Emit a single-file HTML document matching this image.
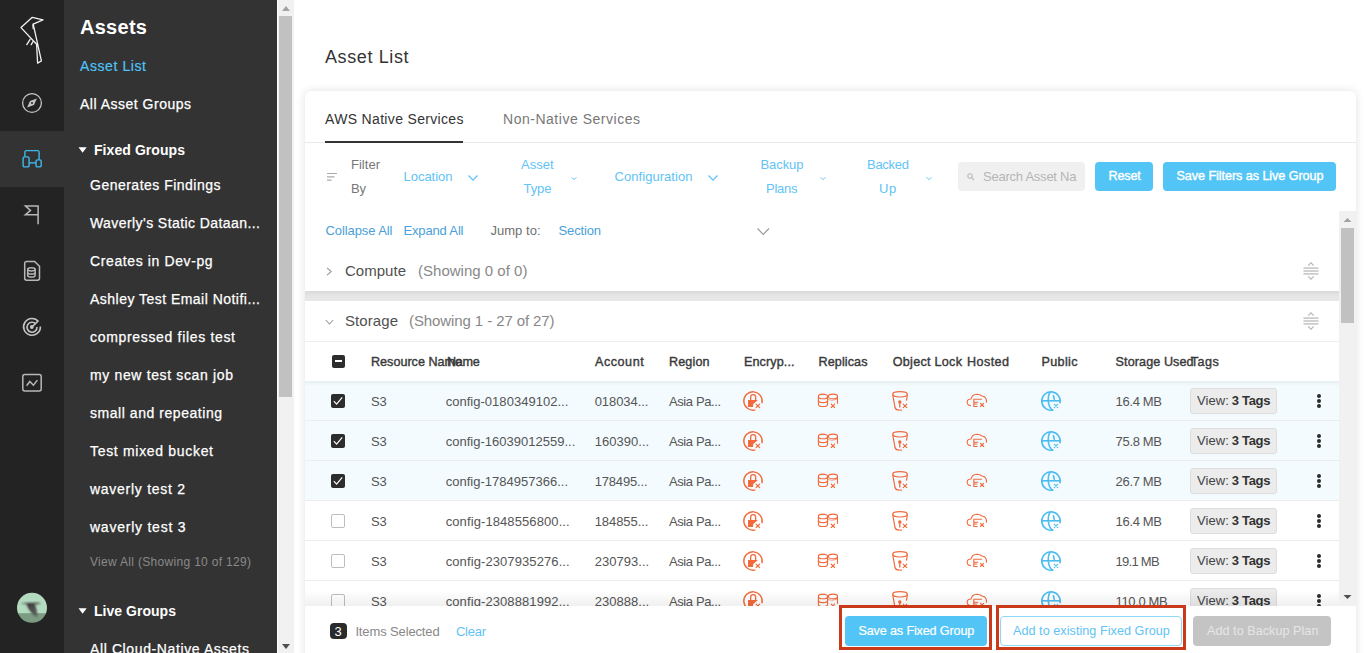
<!DOCTYPE html>
<html><head><meta charset="utf-8">
<style>
*{margin:0;padding:0;box-sizing:border-box}
html,body{width:1365px;height:653px;overflow:hidden;background:#fff;font-family:"Liberation Sans",sans-serif;position:relative}
.abs{position:absolute}
.t{position:absolute;white-space:nowrap;line-height:1}
svg{overflow:visible}
</style></head>
<body>
<div class="abs" style="left:0px;top:0px;width:64px;height:653px;background:#232323"></div>
<div class="abs" style="left:0px;top:131px;width:64px;height:56px;background:#333333"></div>
<svg class="abs" style="left:0;top:0" width="64" height="653" viewBox="0 0 64 653"><g fill="none" stroke="#f2f2f2" stroke-width="1.3" stroke-linejoin="round" stroke-linecap="round"><path d="M33.2 24.2 L43 19.8 L32.3 17.3 L21 27.6 L36.6 44.3 L37.6 63.2 L41.4 60.9 Z"/><path d="M33.2 24.2 C32.6 25.5 33 27 33.3 28.5"/><path d="M30.1 39.4 L26.8 44.6 M33.1 41.5 L31.2 44.6"/></g><circle cx="32" cy="103" r="9.4" fill="none" stroke="#c4c4c4" stroke-width="1.3"/><path d="M36.9 98.4 L34 105 L27.1 107.6 L30 101Z" fill="#c4c4c4"/><circle cx="32" cy="102.9" r="1" fill="#232323"/><g fill="none" stroke="#3fb8ec" stroke-width="1.4"><path d="M24.9 156.6 V152.1 A1.5 1.5 0 0 1 26.4 150.6 H37.6 A1.5 1.5 0 0 1 39.1 152.1 V159.7"/><rect x="23.1" y="156.9" width="6" height="10" rx="1.5"/><rect x="36" y="159.9" width="5.2" height="7" rx="1.5"/><path d="M29.1 162.9 H36"/></g><path d="M38.1 224.2 V205.9 H25.4 L30.5 210.4 L25.4 214.8 H38.1" fill="none" stroke="#b8b8b8" stroke-width="1.5" stroke-linejoin="miter"/><g fill="none" stroke="#b8b8b8" stroke-width="1.5"><path d="M34.6 261.5 H26.6 A1.9 1.9 0 0 0 24.7 263.4 V278.3 A1.9 1.9 0 0 0 26.6 280.2 H37.6 A1.9 1.9 0 0 0 39.5 278.3 V266.3 Z"/><ellipse cx="31.4" cy="269.3" rx="3.7" ry="1.6"/><path d="M27.7 269.3 V275.4 A3.7 1.6 0 0 0 35.1 275.4 V269.3"/><path d="M27.7 272.4 A3.7 1.6 0 0 0 35.1 272.4"/></g><g fill="none" stroke="#c4c4c4" stroke-width="1.6"><path d="M38.5 321.5 A8.4 8.4 0 1 0 40.4 326.5"/><path d="M35.8 324 A5 5 0 1 0 37 327"/><path d="M32 327 L38 321"/></g><circle cx="31.8" cy="327" r="1.9" fill="#c4c4c4"/><g fill="none" stroke="#b8b8b8" stroke-width="1.5"><rect x="22.8" y="374.6" width="18.4" height="16.3" rx="2"/><path d="M26.6 385.7 L29.8 381.5 L33.4 385.2 L37.4 380.1"/></g><defs><clipPath id="av"><circle cx="32" cy="607.8" r="15"/></clipPath></defs><filter id="bl"><feGaussianBlur stdDeviation="0.9"/></filter><g clip-path="url(#av)"><rect x="17" y="592" width="30" height="22" fill="#b4dbbf"/><rect x="17" y="613.2" width="30" height="10" fill="#7b9c82"/><g filter="url(#bl)"><path d="M20.3 603.4 C24 602.6 28 602.6 31 603 C35 602.4 38 602.4 40.5 603 L39 604.3 C37 604 35 604.5 34 605.5 Z" fill="#555"/><path d="M26.8 603.6 C29.5 602.2 33.5 602.6 34.8 604.8 C36 607.5 37 611.5 37.2 617 C34 615.5 30.2 611.5 28.2 607.8 C27.2 606 26.6 604.6 26.8 603.6Z" fill="#3a3a3a"/><path d="M31.5 606 C33 609 34.5 612.5 36.6 616.5" stroke="#6a6a6a" stroke-width="1.4" fill="none"/></g></g></svg>
<div class="abs" style="left:64px;top:0px;width:213px;height:653px;background:#333333"></div>
<div class="abs" style="left:277px;top:0px;width:1px;height:653px;background:#ffffff"></div>
<div class="abs" style="left:278px;top:0px;width:16px;height:653px;background:#f1f1f1"></div>
<div class="abs" style="left:279px;top:16px;width:13px;height:381px;background:#c1c1c1"></div>
<svg class="abs" style="left:278px;top:0" width="16" height="653"><path d="M4 11 L8 6 L12 11Z" fill="#a3a3a3"/><path d="M4 644 L8 649 L12 644Z" fill="#505050"/></svg>
<div class="t" style="left:80px;top:17.07px;font-size:20px;color:#fff;font-weight:bold;letter-spacing:0.278px;">Assets</div>
<div class="t" style="left:80px;top:59.15px;font-size:14px;color:#4fc3f7;letter-spacing:0.589px;-webkit-text-stroke:0.2px #4fc3f7;">Asset List</div>
<div class="t" style="left:80px;top:97.15px;font-size:14px;color:#fff;letter-spacing:0.5px;-webkit-text-stroke:0.25px #fff;">All Asset Groups</div>
<svg class="abs" style="left:77.5px;top:146.8px" width="10" height="7"><path d="M0.5 0.3 L8.7 0.3 L4.6 5.8Z" fill="#fff"/></svg>
<div class="t" style="left:94px;top:143.15px;font-size:14px;color:#fff;font-weight:bold;letter-spacing:0.07px;">Fixed Groups</div>
<div class="t" style="left:90px;top:178.15px;font-size:14px;color:#fff;letter-spacing:0.489px;-webkit-text-stroke:0.25px #fff;">Generates Findings</div>
<div class="t" style="left:90px;top:216.15px;font-size:14px;color:#fff;letter-spacing:0.427px;-webkit-text-stroke:0.25px #fff;">Waverly's Static Dataan...</div>
<div class="t" style="left:90px;top:254.15px;font-size:14px;color:#fff;letter-spacing:0.611px;-webkit-text-stroke:0.25px #fff;">Creates in Dev-pg</div>
<div class="t" style="left:90px;top:292.15px;font-size:14px;color:#fff;letter-spacing:0.474px;-webkit-text-stroke:0.25px #fff;">Ashley Test Email Notifi...</div>
<div class="t" style="left:90px;top:330.15px;font-size:14px;color:#fff;letter-spacing:0.675px;-webkit-text-stroke:0.25px #fff;">compressed files test</div>
<div class="t" style="left:90px;top:368.15px;font-size:14px;color:#fff;letter-spacing:0.646px;-webkit-text-stroke:0.25px #fff;">my new test scan job</div>
<div class="t" style="left:90px;top:406.15px;font-size:14px;color:#fff;letter-spacing:0.545px;-webkit-text-stroke:0.25px #fff;">small and repeating</div>
<div class="t" style="left:90px;top:444.15px;font-size:14px;color:#fff;letter-spacing:0.684px;-webkit-text-stroke:0.25px #fff;">Test mixed bucket</div>
<div class="t" style="left:90px;top:482.15px;font-size:14px;color:#fff;letter-spacing:0.724px;-webkit-text-stroke:0.25px #fff;">waverly test 2</div>
<div class="t" style="left:90px;top:520.15px;font-size:14px;color:#fff;letter-spacing:0.762px;-webkit-text-stroke:0.25px #fff;">waverly test 3</div>
<div class="t" style="left:90px;top:555.84px;font-size:12px;color:#8a8a8a;letter-spacing:0.313px;">View All (Showing 10 of 129)</div>
<svg class="abs" style="left:77.5px;top:608.3px" width="10" height="7"><path d="M0.5 0.3 L8.7 0.3 L4.6 5.8Z" fill="#fff"/></svg>
<div class="t" style="left:94px;top:604.15px;font-size:14px;color:#fff;font-weight:bold;letter-spacing:0.031px;">Live Groups</div>
<div class="t" style="left:90px;top:641.65px;font-size:14px;color:#fff;letter-spacing:0.613px;-webkit-text-stroke:0.25px #fff;">All Cloud-Native Assets</div>
<div class="t" style="left:325px;top:47.76px;font-size:18px;color:#333;letter-spacing:0.608px;">Asset List</div>
<div class="abs" style="left:305px;top:91px;width:1051px;height:600px;background:#fff;border-radius:6px;box-shadow:0 0 10px rgba(0,0,0,0.12)"></div>
<div class="t" style="left:325px;top:112.15px;font-size:14px;color:#333;letter-spacing:0.332px;">AWS Native Services</div>
<div class="t" style="left:503px;top:112.15px;font-size:14px;color:#777;letter-spacing:0.522px;">Non-Native Services</div>
<div class="abs" style="left:305px;top:142px;width:1051px;height:1px;background:#e9e9e9"></div>
<div class="abs" style="left:325px;top:141px;width:138px;height:2px;background:#333333"></div>
<svg class="abs" style="left:326px;top:172px" width="12" height="10"><g stroke="#aaa" stroke-width="1.2"><path d="M1 1.5H11M1 4.8H8.5M1 8.1H5.5"/></g></svg>
<div class="t" style="left:351px;top:158.00px;font-size:13px;color:#777;letter-spacing:0.022px;">Filter</div>
<div class="t" style="left:351px;top:182.00px;font-size:13px;color:#777;letter-spacing:-0.172px;">By</div>
<div class="t" style="left:403.5px;top:170.00px;font-size:13px;color:#5fc3f5;letter-spacing:-0.022px;">Location</div>
<svg class="abs" style="left:467.5px;top:174.5px" width="10" height="5.6"><path d="M0.5 0.5 L5.0 5.1 L9.5 0.5" fill="none" stroke="#5fc3f5" stroke-width="1.3"/></svg>
<div class="t" style="left:521px;top:158.00px;font-size:13px;color:#5fc3f5;letter-spacing:-0.004px;">Asset</div>
<div class="t" style="left:523.5px;top:182.00px;font-size:13px;color:#5fc3f5;letter-spacing:-0.062px;">Type</div>
<svg class="abs" style="left:570.5px;top:176.5px" width="6" height="3"><path d="M0.5 0.5 L3.0 2.5 L5.5 0.5" fill="none" stroke="#5fc3f5" stroke-width="0.9"/></svg>
<div class="t" style="left:614.5px;top:170.00px;font-size:13px;color:#5fc3f5;letter-spacing:0.056px;">Configuration</div>
<svg class="abs" style="left:707.5px;top:174.5px" width="10" height="5.6"><path d="M0.5 0.5 L5.0 5.1 L9.5 0.5" fill="none" stroke="#5fc3f5" stroke-width="1.3"/></svg>
<div class="t" style="left:760.5px;top:158.00px;font-size:13px;color:#5fc3f5;letter-spacing:-0.075px;">Backup</div>
<div class="t" style="left:766px;top:182.00px;font-size:13px;color:#5fc3f5;letter-spacing:-0.258px;">Plans</div>
<svg class="abs" style="left:820px;top:176.5px" width="6" height="3"><path d="M0.5 0.5 L3.0 2.5 L5.5 0.5" fill="none" stroke="#5fc3f5" stroke-width="0.9"/></svg>
<div class="t" style="left:867px;top:158.00px;font-size:13px;color:#5fc3f5;letter-spacing:-0.275px;">Backed</div>
<div class="t" style="left:879px;top:182.00px;font-size:13px;color:#5fc3f5;letter-spacing:0.675px;">Up</div>
<svg class="abs" style="left:925.5px;top:176.5px" width="6" height="3"><path d="M0.5 0.5 L3.0 2.5 L5.5 0.5" fill="none" stroke="#5fc3f5" stroke-width="0.9"/></svg>
<div class="abs" style="left:958px;top:162px;width:127px;height:29px;background:#f0f0f0;border-radius:4px"></div>
<svg class="abs" style="left:967px;top:173px" width="8" height="8"><circle cx="3" cy="3" r="2.2" fill="none" stroke="#bbb" stroke-width="1.1"/><path d="M4.6 4.6L7 7" stroke="#bbb" stroke-width="1.2"/></svg>
<div class="t" style="left:983px;top:170.00px;font-size:13px;color:#b5b5b5;letter-spacing:-0.238px;">Search Asset Na</div>
<div class="abs" style="left:1077px;top:164px;width:8px;height:25px;background:#f0f0f0;border-radius:0 4px 4px 0"></div>
<div class="abs" style="left:1095px;top:162px;width:58px;height:29px;background:#52c5f6;border-radius:4px"></div>
<div class="t" style="left:1108.5px;top:170.33px;font-size:12.6px;color:#fff;letter-spacing:-0.152px;-webkit-text-stroke:0.4px #fff;">Reset</div>
<div class="abs" style="left:1163px;top:162px;width:173px;height:29px;background:#52c5f6;border-radius:4px"></div>
<div class="t" style="left:1176.5px;top:170.33px;font-size:12.6px;color:#fff;letter-spacing:-0.056px;-webkit-text-stroke:0.4px #fff;">Save Filters as Live Group</div>
<div class="t" style="left:325.5px;top:224.00px;font-size:13px;color:#4a9fd9;letter-spacing:-0.085px;">Collapse All</div>
<div class="t" style="left:403.5px;top:224.00px;font-size:13px;color:#4a9fd9;letter-spacing:-0.16px;">Expand All</div>
<div class="t" style="left:490.5px;top:224.00px;font-size:13px;color:#707070;letter-spacing:0.02px;">Jump to:</div>
<div class="t" style="left:558.5px;top:224.00px;font-size:13px;color:#4a9fd9;letter-spacing:-0.129px;">Section</div>
<svg class="abs" style="left:757px;top:227.5px" width="12.5" height="7"><path d="M0.5 0.5 L6.25 6.5 L12.0 0.5" fill="none" stroke="#999" stroke-width="1.1"/></svg>
<div class="abs" style="left:305px;top:291px;width:1034px;height:10px;background:linear-gradient(#dadada,#e4e4e4 40%,#e8e8e8)"></div>
<svg class="abs" style="left:326px;top:267px" width="7" height="9"><path d="M1 0.8 L5.2 4.5 L1 8.2" fill="none" stroke="#999" stroke-width="1.1"/></svg>
<div class="t" style="left:345px;top:263.30px;font-size:15px;color:#505050;letter-spacing:0.021px;">Compute</div>
<div class="t" style="left:418px;top:263.30px;font-size:15px;color:#888;letter-spacing:0.011px;">(Showing 0 of 0)</div>
<svg class="abs" style="left:325px;top:318.5px" width="9" height="6"><path d="M0.8 1 L4.5 5 L8.2 1" fill="none" stroke="#999" stroke-width="1.1"/></svg>
<div class="t" style="left:345px;top:313.30px;font-size:15px;color:#505050;letter-spacing:0.076px;">Storage</div>
<div class="t" style="left:409px;top:313.30px;font-size:15px;color:#888;letter-spacing:-0.095px;">(Showing 1 - 27 of 27)</div>
<div class="abs" style="left:305px;top:301px;width:1034px;height:1px;background:#fff;border-radius:3px 3px 0 0"></div>
<svg class="abs" style="left:1303px;top:262px" width="16" height="18"><g fill="none" stroke="#b5b5b5" stroke-width="1.2"><path d="M5.2 3.6 L8 0.9 L10.8 3.6"/><path d="M5.2 14.4 L8 17.1 L10.8 14.4"/></g><g fill="#c6c6c6"><rect x="0.5" y="5.3" width="15" height="1.6"/><rect x="0.5" y="8.2" width="15" height="1.6"/><rect x="0.5" y="11.1" width="15" height="1.6"/></g></svg>
<svg class="abs" style="left:1303px;top:312px" width="16" height="18"><g fill="none" stroke="#b5b5b5" stroke-width="1.2"><path d="M5.2 3.6 L8 0.9 L10.8 3.6"/><path d="M5.2 14.4 L8 17.1 L10.8 14.4"/></g><g fill="#c6c6c6"><rect x="0.5" y="5.3" width="15" height="1.6"/><rect x="0.5" y="8.2" width="15" height="1.6"/><rect x="0.5" y="11.1" width="15" height="1.6"/></g></svg>
<div class="abs" style="left:305px;top:341px;width:1034px;height:1px;background:#eeeeee"></div>
<div class="abs" style="left:331.5px;top:354.5px;width:13px;height:13px;background:#2d2d2d;border-radius:2px"></div>
<div class="abs" style="left:334.5px;top:360px;width:7px;height:1.8px;background:#fff"></div>
<div class="t" style="left:371px;top:355.83px;font-size:12.6px;color:#3a3a3a;letter-spacing:0.0px;-webkit-text-stroke:0.4px #3a3a3a;">Resource Name</div>
<div class="t" style="left:447px;top:355.83px;font-size:12.6px;color:#3a3a3a;letter-spacing:-0.298px;-webkit-text-stroke:0.4px #3a3a3a;">Name</div>
<div class="t" style="left:595px;top:355.83px;font-size:12.6px;color:#3a3a3a;letter-spacing:0.531px;-webkit-text-stroke:0.4px #3a3a3a;">Account</div>
<div class="t" style="left:669px;top:355.83px;font-size:12.6px;color:#3a3a3a;letter-spacing:0.136px;-webkit-text-stroke:0.4px #3a3a3a;">Region</div>
<div class="t" style="left:744px;top:355.83px;font-size:12.6px;color:#3a3a3a;letter-spacing:0.1px;-webkit-text-stroke:0.4px #3a3a3a;">Encryp...</div>
<div class="t" style="left:818.5px;top:355.83px;font-size:12.6px;color:#3a3a3a;letter-spacing:0.1px;-webkit-text-stroke:0.4px #3a3a3a;">Replicas</div>
<div class="t" style="left:892.7px;top:355.83px;font-size:12.6px;color:#3a3a3a;letter-spacing:0.28px;-webkit-text-stroke:0.4px #3a3a3a;">Object Lock</div>
<div class="t" style="left:967px;top:355.83px;font-size:12.6px;color:#3a3a3a;letter-spacing:0.419px;-webkit-text-stroke:0.4px #3a3a3a;">Hosted</div>
<div class="t" style="left:1041.5px;top:355.83px;font-size:12.6px;color:#3a3a3a;letter-spacing:0.338px;-webkit-text-stroke:0.4px #3a3a3a;">Public</div>
<div class="t" style="left:1115.6px;top:355.83px;font-size:12.6px;color:#3a3a3a;letter-spacing:0.089px;-webkit-text-stroke:0.4px #3a3a3a;">Storage Used</div>
<div class="t" style="left:1190.8px;top:355.83px;font-size:12.6px;color:#3a3a3a;letter-spacing:0.464px;-webkit-text-stroke:0.4px #3a3a3a;">Tags</div>
<div class="abs" style="left:305px;top:381px;width:1034px;height:40px;background:#f3fbfe"></div>
<div class="abs" style="left:305px;top:420px;width:1034px;height:1px;background:#ececec"></div>
<div class="abs" style="left:331px;top:393.5px;width:14px;height:14px;background:#2d2d2d;border-radius:2px"></div>
<svg class="abs" style="left:331px;top:393.5px" width="14" height="14"><path d="M2.8 7.2 L5.6 10.2 L11.2 3.4" fill="none" stroke="#fff" stroke-width="1.2"/></svg>
<div class="t" style="left:371px;top:395.00px;font-size:13px;color:#555;letter-spacing:-0.106px;">S3</div>
<div class="t" style="left:445.7px;top:395.00px;font-size:13px;color:#555;letter-spacing:0.023px;">config-0180349102...</div>
<div class="t" style="left:594.7px;top:395.00px;font-size:13px;color:#555;letter-spacing:-0.065px;">018034...</div>
<div class="t" style="left:669px;top:395.00px;font-size:13px;color:#555;letter-spacing:-0.405px;">Asia Pa...</div>
<svg class="abs" style="left:740px;top:388px" width="26" height="26" viewBox="0 0 26 26"><path d="M21.93 15.23 A9.2 9.2 0 1 0 15.38 21.89" fill="none" stroke="#f26a3c" stroke-width="1.35"/><path d="M10.65 12.2 V9.1 A2.5 2.5 0 0 1 15.65 9.1 V12.2" fill="none" stroke="#f26a3c" stroke-width="1.3"/><path d="M8 12 H17.9 L13.1 16.3 V18.9 H8Z" fill="#f26a3c"/><path d="M16.099999999999998 16.099999999999998 L19.7 19.7 M19.7 16.099999999999998 L16.099999999999998 19.7" stroke="#f26a3c" stroke-width="1.15" stroke-linecap="round"/></svg>
<svg class="abs" style="left:814px;top:388px" width="28" height="24" viewBox="0 0 28 24"><g fill="none" stroke="#f26a3c" stroke-width="1.1"><ellipse cx="9" cy="8.4" rx="4.6" ry="2.3"/><path d="M4.4 8.4 V16.2 A4.6 2.3 0 0 0 13.6 16.2 V8.4"/><path d="M4.4 12.3 A4.6 2.3 0 0 0 13.6 12.3"/><ellipse cx="18.9" cy="8.4" rx="4.6" ry="2.3"/><path d="M13.9 11.2 Q18.9 13.2 23.5 10.8" stroke-opacity="0.55"/><path d="M23.5 8.4 V15.8"/></g><path d="M17.2 16.1 L20.599999999999998 19.5 M20.599999999999998 16.1 L17.2 19.5" stroke="#f26a3c" stroke-width="1.15" stroke-linecap="round"/></svg>
<svg class="abs" style="left:888px;top:388px" width="24" height="26" viewBox="0 0 24 26"><g fill="none" stroke="#f26a3c" stroke-width="1.2"><ellipse cx="12" cy="6.3" rx="7.3" ry="2.7"/><path d="M4.7 6.5 L7 19.5 Q7.6 21.9 11 22 L14 22.1"/><path d="M19.3 6.5 L18.5 12.7"/></g><circle cx="11.8" cy="14" r="1.7" fill="#f26a3c"/><path d="M11.8 14 V19.5" stroke="#f26a3c" stroke-width="1.3"/><path d="M15.2 16.099999999999998 L18.8 19.7 M18.8 16.099999999999998 L15.2 19.7" stroke="#f26a3c" stroke-width="1.15" stroke-linecap="round"/></svg>
<svg class="abs" style="left:964px;top:390px" width="26" height="20" viewBox="0 0 26 20"><g fill="none" stroke="#f26a3c" stroke-width="1.1" stroke-linecap="round"><path d="M6.4 15.6 C4.2 15.2 3.1 13.6 3.2 12 C3.3 10.2 4.8 9 7 9 C7.6 6.2 9.8 4.4 13 4.3 C15.4 4.3 17 5.2 18.6 6.2 C21 6.4 22.6 8.4 22.5 12.3"/><path d="M9.8 9.3 V16.5 M9.8 9.3 H17.5 M9.8 12.2 H13.8 M9.8 14 H12.8 M9.8 16.5 H13.2"/></g><path d="M16.47 13.3 L19.67 16.5 M19.67 13.3 L16.47 16.5" stroke="#f26a3c" stroke-width="1.15" stroke-linecap="round"/></svg>
<svg class="abs" style="left:1038px;top:388px" width="26" height="26" viewBox="0 0 26 26"><g fill="none" stroke="#4cbcf2" stroke-width="1.6"><path d="M21.93 15.23 A9.2 9.2 0 1 0 15.38 21.89"/><path d="M3.6 12.8 H22.4"/><path d="M12.6 3.8 C9.2 7.6 9.2 18.4 14.6 22.2"/><path d="M15.2 7.2 C15.9 8.6 16.3 10.5 16.4 12.8"/></g><path d="M16.3 16.3 L19.7 19.7 M19.7 16.3 L16.3 19.7" stroke="#4cbcf2" stroke-width="1.15" stroke-linecap="round"/></svg>
<div class="t" style="left:1115.6px;top:395.00px;font-size:13px;color:#555;letter-spacing:-0.337px;">16.4 MB</div>
<div class="abs" style="left:1190px;top:388px;width:87px;height:26px;background:#ececec;border:1px solid #dddddd;border-radius:3px"></div>
<div class="t" style="left:1197px;top:394.20px;font-size:13px;color:#444;letter-spacing:0.059px;">View:</div>
<div class="t" style="left:1231.7px;top:394.20px;font-size:13px;color:#333;font-weight:bold;letter-spacing:-0.284px;">3 Tags</div>
<div class="abs" style="left:1317px;top:393.5px;width:4px;height:4px;background:#2a2a2a;border-radius:50%"></div>
<div class="abs" style="left:1317px;top:398.9px;width:4px;height:4px;background:#2a2a2a;border-radius:50%"></div>
<div class="abs" style="left:1317px;top:404.3px;width:4px;height:4px;background:#2a2a2a;border-radius:50%"></div>
<div class="abs" style="left:305px;top:421px;width:1034px;height:40px;background:#f3fbfe"></div>
<div class="abs" style="left:305px;top:460px;width:1034px;height:1px;background:#ececec"></div>
<div class="abs" style="left:331px;top:433.5px;width:14px;height:14px;background:#2d2d2d;border-radius:2px"></div>
<svg class="abs" style="left:331px;top:433.5px" width="14" height="14"><path d="M2.8 7.2 L5.6 10.2 L11.2 3.4" fill="none" stroke="#fff" stroke-width="1.2"/></svg>
<div class="t" style="left:371px;top:435.00px;font-size:13px;color:#555;letter-spacing:-0.106px;">S3</div>
<div class="t" style="left:445.7px;top:435.00px;font-size:13px;color:#555;letter-spacing:0.01px;">config-16039012559...</div>
<div class="t" style="left:594.7px;top:435.00px;font-size:13px;color:#555;letter-spacing:0.035px;">160390...</div>
<div class="t" style="left:669px;top:435.00px;font-size:13px;color:#555;letter-spacing:-0.405px;">Asia Pa...</div>
<svg class="abs" style="left:740px;top:428px" width="26" height="26" viewBox="0 0 26 26"><path d="M21.93 15.23 A9.2 9.2 0 1 0 15.38 21.89" fill="none" stroke="#f26a3c" stroke-width="1.35"/><path d="M10.65 12.2 V9.1 A2.5 2.5 0 0 1 15.65 9.1 V12.2" fill="none" stroke="#f26a3c" stroke-width="1.3"/><path d="M8 12 H17.9 L13.1 16.3 V18.9 H8Z" fill="#f26a3c"/><path d="M16.099999999999998 16.099999999999998 L19.7 19.7 M19.7 16.099999999999998 L16.099999999999998 19.7" stroke="#f26a3c" stroke-width="1.15" stroke-linecap="round"/></svg>
<svg class="abs" style="left:814px;top:428px" width="28" height="24" viewBox="0 0 28 24"><g fill="none" stroke="#f26a3c" stroke-width="1.1"><ellipse cx="9" cy="8.4" rx="4.6" ry="2.3"/><path d="M4.4 8.4 V16.2 A4.6 2.3 0 0 0 13.6 16.2 V8.4"/><path d="M4.4 12.3 A4.6 2.3 0 0 0 13.6 12.3"/><ellipse cx="18.9" cy="8.4" rx="4.6" ry="2.3"/><path d="M13.9 11.2 Q18.9 13.2 23.5 10.8" stroke-opacity="0.55"/><path d="M23.5 8.4 V15.8"/></g><path d="M17.2 16.1 L20.599999999999998 19.5 M20.599999999999998 16.1 L17.2 19.5" stroke="#f26a3c" stroke-width="1.15" stroke-linecap="round"/></svg>
<svg class="abs" style="left:888px;top:428px" width="24" height="26" viewBox="0 0 24 26"><g fill="none" stroke="#f26a3c" stroke-width="1.2"><ellipse cx="12" cy="6.3" rx="7.3" ry="2.7"/><path d="M4.7 6.5 L7 19.5 Q7.6 21.9 11 22 L14 22.1"/><path d="M19.3 6.5 L18.5 12.7"/></g><circle cx="11.8" cy="14" r="1.7" fill="#f26a3c"/><path d="M11.8 14 V19.5" stroke="#f26a3c" stroke-width="1.3"/><path d="M15.2 16.099999999999998 L18.8 19.7 M18.8 16.099999999999998 L15.2 19.7" stroke="#f26a3c" stroke-width="1.15" stroke-linecap="round"/></svg>
<svg class="abs" style="left:964px;top:430px" width="26" height="20" viewBox="0 0 26 20"><g fill="none" stroke="#f26a3c" stroke-width="1.1" stroke-linecap="round"><path d="M6.4 15.6 C4.2 15.2 3.1 13.6 3.2 12 C3.3 10.2 4.8 9 7 9 C7.6 6.2 9.8 4.4 13 4.3 C15.4 4.3 17 5.2 18.6 6.2 C21 6.4 22.6 8.4 22.5 12.3"/><path d="M9.8 9.3 V16.5 M9.8 9.3 H17.5 M9.8 12.2 H13.8 M9.8 14 H12.8 M9.8 16.5 H13.2"/></g><path d="M16.47 13.3 L19.67 16.5 M19.67 13.3 L16.47 16.5" stroke="#f26a3c" stroke-width="1.15" stroke-linecap="round"/></svg>
<svg class="abs" style="left:1038px;top:428px" width="26" height="26" viewBox="0 0 26 26"><g fill="none" stroke="#4cbcf2" stroke-width="1.6"><path d="M21.93 15.23 A9.2 9.2 0 1 0 15.38 21.89"/><path d="M3.6 12.8 H22.4"/><path d="M12.6 3.8 C9.2 7.6 9.2 18.4 14.6 22.2"/><path d="M15.2 7.2 C15.9 8.6 16.3 10.5 16.4 12.8"/></g><path d="M16.3 16.3 L19.7 19.7 M19.7 16.3 L16.3 19.7" stroke="#4cbcf2" stroke-width="1.15" stroke-linecap="round"/></svg>
<div class="t" style="left:1115.6px;top:435.00px;font-size:13px;color:#555;letter-spacing:-0.337px;">75.8 MB</div>
<div class="abs" style="left:1190px;top:428px;width:87px;height:26px;background:#ececec;border:1px solid #dddddd;border-radius:3px"></div>
<div class="t" style="left:1197px;top:434.20px;font-size:13px;color:#444;letter-spacing:0.059px;">View:</div>
<div class="t" style="left:1231.7px;top:434.20px;font-size:13px;color:#333;font-weight:bold;letter-spacing:-0.284px;">3 Tags</div>
<div class="abs" style="left:1317px;top:433.5px;width:4px;height:4px;background:#2a2a2a;border-radius:50%"></div>
<div class="abs" style="left:1317px;top:438.9px;width:4px;height:4px;background:#2a2a2a;border-radius:50%"></div>
<div class="abs" style="left:1317px;top:444.3px;width:4px;height:4px;background:#2a2a2a;border-radius:50%"></div>
<div class="abs" style="left:305px;top:461px;width:1034px;height:40px;background:#f3fbfe"></div>
<div class="abs" style="left:305px;top:500px;width:1034px;height:1px;background:#ececec"></div>
<div class="abs" style="left:331px;top:473.5px;width:14px;height:14px;background:#2d2d2d;border-radius:2px"></div>
<svg class="abs" style="left:331px;top:473.5px" width="14" height="14"><path d="M2.8 7.2 L5.6 10.2 L11.2 3.4" fill="none" stroke="#fff" stroke-width="1.2"/></svg>
<div class="t" style="left:371px;top:475.00px;font-size:13px;color:#555;letter-spacing:-0.106px;">S3</div>
<div class="t" style="left:445.7px;top:475.00px;font-size:13px;color:#555;letter-spacing:0.008px;">config-1784957366...</div>
<div class="t" style="left:594.7px;top:475.00px;font-size:13px;color:#555;letter-spacing:-0.177px;">178495...</div>
<div class="t" style="left:669px;top:475.00px;font-size:13px;color:#555;letter-spacing:-0.405px;">Asia Pa...</div>
<svg class="abs" style="left:740px;top:468px" width="26" height="26" viewBox="0 0 26 26"><path d="M21.93 15.23 A9.2 9.2 0 1 0 15.38 21.89" fill="none" stroke="#f26a3c" stroke-width="1.35"/><path d="M10.65 12.2 V9.1 A2.5 2.5 0 0 1 15.65 9.1 V12.2" fill="none" stroke="#f26a3c" stroke-width="1.3"/><path d="M8 12 H17.9 L13.1 16.3 V18.9 H8Z" fill="#f26a3c"/><path d="M16.099999999999998 16.099999999999998 L19.7 19.7 M19.7 16.099999999999998 L16.099999999999998 19.7" stroke="#f26a3c" stroke-width="1.15" stroke-linecap="round"/></svg>
<svg class="abs" style="left:814px;top:468px" width="28" height="24" viewBox="0 0 28 24"><g fill="none" stroke="#f26a3c" stroke-width="1.1"><ellipse cx="9" cy="8.4" rx="4.6" ry="2.3"/><path d="M4.4 8.4 V16.2 A4.6 2.3 0 0 0 13.6 16.2 V8.4"/><path d="M4.4 12.3 A4.6 2.3 0 0 0 13.6 12.3"/><ellipse cx="18.9" cy="8.4" rx="4.6" ry="2.3"/><path d="M13.9 11.2 Q18.9 13.2 23.5 10.8" stroke-opacity="0.55"/><path d="M23.5 8.4 V15.8"/></g><path d="M17.2 16.1 L20.599999999999998 19.5 M20.599999999999998 16.1 L17.2 19.5" stroke="#f26a3c" stroke-width="1.15" stroke-linecap="round"/></svg>
<svg class="abs" style="left:888px;top:468px" width="24" height="26" viewBox="0 0 24 26"><g fill="none" stroke="#f26a3c" stroke-width="1.2"><ellipse cx="12" cy="6.3" rx="7.3" ry="2.7"/><path d="M4.7 6.5 L7 19.5 Q7.6 21.9 11 22 L14 22.1"/><path d="M19.3 6.5 L18.5 12.7"/></g><circle cx="11.8" cy="14" r="1.7" fill="#f26a3c"/><path d="M11.8 14 V19.5" stroke="#f26a3c" stroke-width="1.3"/><path d="M15.2 16.099999999999998 L18.8 19.7 M18.8 16.099999999999998 L15.2 19.7" stroke="#f26a3c" stroke-width="1.15" stroke-linecap="round"/></svg>
<svg class="abs" style="left:964px;top:470px" width="26" height="20" viewBox="0 0 26 20"><g fill="none" stroke="#f26a3c" stroke-width="1.1" stroke-linecap="round"><path d="M6.4 15.6 C4.2 15.2 3.1 13.6 3.2 12 C3.3 10.2 4.8 9 7 9 C7.6 6.2 9.8 4.4 13 4.3 C15.4 4.3 17 5.2 18.6 6.2 C21 6.4 22.6 8.4 22.5 12.3"/><path d="M9.8 9.3 V16.5 M9.8 9.3 H17.5 M9.8 12.2 H13.8 M9.8 14 H12.8 M9.8 16.5 H13.2"/></g><path d="M16.47 13.3 L19.67 16.5 M19.67 13.3 L16.47 16.5" stroke="#f26a3c" stroke-width="1.15" stroke-linecap="round"/></svg>
<svg class="abs" style="left:1038px;top:468px" width="26" height="26" viewBox="0 0 26 26"><g fill="none" stroke="#4cbcf2" stroke-width="1.6"><path d="M21.93 15.23 A9.2 9.2 0 1 0 15.38 21.89"/><path d="M3.6 12.8 H22.4"/><path d="M12.6 3.8 C9.2 7.6 9.2 18.4 14.6 22.2"/><path d="M15.2 7.2 C15.9 8.6 16.3 10.5 16.4 12.8"/></g><path d="M16.3 16.3 L19.7 19.7 M19.7 16.3 L16.3 19.7" stroke="#4cbcf2" stroke-width="1.15" stroke-linecap="round"/></svg>
<div class="t" style="left:1115.6px;top:475.00px;font-size:13px;color:#555;letter-spacing:-0.337px;">26.7 MB</div>
<div class="abs" style="left:1190px;top:468px;width:87px;height:26px;background:#ececec;border:1px solid #dddddd;border-radius:3px"></div>
<div class="t" style="left:1197px;top:474.20px;font-size:13px;color:#444;letter-spacing:0.059px;">View:</div>
<div class="t" style="left:1231.7px;top:474.20px;font-size:13px;color:#333;font-weight:bold;letter-spacing:-0.284px;">3 Tags</div>
<div class="abs" style="left:1317px;top:473.5px;width:4px;height:4px;background:#2a2a2a;border-radius:50%"></div>
<div class="abs" style="left:1317px;top:478.9px;width:4px;height:4px;background:#2a2a2a;border-radius:50%"></div>
<div class="abs" style="left:1317px;top:484.3px;width:4px;height:4px;background:#2a2a2a;border-radius:50%"></div>
<div class="abs" style="left:305px;top:540px;width:1034px;height:1px;background:#ececec"></div>
<div class="abs" style="left:331px;top:513.5px;width:14px;height:14px;background:#fff;border:1px solid #bdbdbd;border-radius:2px"></div>
<div class="t" style="left:371px;top:515.00px;font-size:13px;color:#555;letter-spacing:-0.106px;">S3</div>
<div class="t" style="left:445.7px;top:515.00px;font-size:13px;color:#555;letter-spacing:0.097px;">config-1848556800...</div>
<div class="t" style="left:594.7px;top:515.00px;font-size:13px;color:#555;letter-spacing:-0.065px;">184855...</div>
<div class="t" style="left:669px;top:515.00px;font-size:13px;color:#555;letter-spacing:-0.405px;">Asia Pa...</div>
<svg class="abs" style="left:740px;top:508px" width="26" height="26" viewBox="0 0 26 26"><path d="M21.93 15.23 A9.2 9.2 0 1 0 15.38 21.89" fill="none" stroke="#f26a3c" stroke-width="1.35"/><path d="M10.65 12.2 V9.1 A2.5 2.5 0 0 1 15.65 9.1 V12.2" fill="none" stroke="#f26a3c" stroke-width="1.3"/><path d="M8 12 H17.9 L13.1 16.3 V18.9 H8Z" fill="#f26a3c"/><path d="M16.099999999999998 16.099999999999998 L19.7 19.7 M19.7 16.099999999999998 L16.099999999999998 19.7" stroke="#f26a3c" stroke-width="1.15" stroke-linecap="round"/></svg>
<svg class="abs" style="left:814px;top:508px" width="28" height="24" viewBox="0 0 28 24"><g fill="none" stroke="#f26a3c" stroke-width="1.1"><ellipse cx="9" cy="8.4" rx="4.6" ry="2.3"/><path d="M4.4 8.4 V16.2 A4.6 2.3 0 0 0 13.6 16.2 V8.4"/><path d="M4.4 12.3 A4.6 2.3 0 0 0 13.6 12.3"/><ellipse cx="18.9" cy="8.4" rx="4.6" ry="2.3"/><path d="M13.9 11.2 Q18.9 13.2 23.5 10.8" stroke-opacity="0.55"/><path d="M23.5 8.4 V15.8"/></g><path d="M17.2 16.1 L20.599999999999998 19.5 M20.599999999999998 16.1 L17.2 19.5" stroke="#f26a3c" stroke-width="1.15" stroke-linecap="round"/></svg>
<svg class="abs" style="left:888px;top:508px" width="24" height="26" viewBox="0 0 24 26"><g fill="none" stroke="#f26a3c" stroke-width="1.2"><ellipse cx="12" cy="6.3" rx="7.3" ry="2.7"/><path d="M4.7 6.5 L7 19.5 Q7.6 21.9 11 22 L14 22.1"/><path d="M19.3 6.5 L18.5 12.7"/></g><circle cx="11.8" cy="14" r="1.7" fill="#f26a3c"/><path d="M11.8 14 V19.5" stroke="#f26a3c" stroke-width="1.3"/><path d="M15.2 16.099999999999998 L18.8 19.7 M18.8 16.099999999999998 L15.2 19.7" stroke="#f26a3c" stroke-width="1.15" stroke-linecap="round"/></svg>
<svg class="abs" style="left:964px;top:510px" width="26" height="20" viewBox="0 0 26 20"><g fill="none" stroke="#f26a3c" stroke-width="1.1" stroke-linecap="round"><path d="M6.4 15.6 C4.2 15.2 3.1 13.6 3.2 12 C3.3 10.2 4.8 9 7 9 C7.6 6.2 9.8 4.4 13 4.3 C15.4 4.3 17 5.2 18.6 6.2 C21 6.4 22.6 8.4 22.5 12.3"/><path d="M9.8 9.3 V16.5 M9.8 9.3 H17.5 M9.8 12.2 H13.8 M9.8 14 H12.8 M9.8 16.5 H13.2"/></g><path d="M16.47 13.3 L19.67 16.5 M19.67 13.3 L16.47 16.5" stroke="#f26a3c" stroke-width="1.15" stroke-linecap="round"/></svg>
<svg class="abs" style="left:1038px;top:508px" width="26" height="26" viewBox="0 0 26 26"><g fill="none" stroke="#4cbcf2" stroke-width="1.6"><path d="M21.93 15.23 A9.2 9.2 0 1 0 15.38 21.89"/><path d="M3.6 12.8 H22.4"/><path d="M12.6 3.8 C9.2 7.6 9.2 18.4 14.6 22.2"/><path d="M15.2 7.2 C15.9 8.6 16.3 10.5 16.4 12.8"/></g><path d="M16.3 16.3 L19.7 19.7 M19.7 16.3 L16.3 19.7" stroke="#4cbcf2" stroke-width="1.15" stroke-linecap="round"/></svg>
<div class="t" style="left:1115.6px;top:515.00px;font-size:13px;color:#555;letter-spacing:-0.337px;">16.4 MB</div>
<div class="abs" style="left:1190px;top:508px;width:87px;height:26px;background:#ececec;border:1px solid #dddddd;border-radius:3px"></div>
<div class="t" style="left:1197px;top:514.20px;font-size:13px;color:#444;letter-spacing:0.059px;">View:</div>
<div class="t" style="left:1231.7px;top:514.20px;font-size:13px;color:#333;font-weight:bold;letter-spacing:-0.284px;">3 Tags</div>
<div class="abs" style="left:1317px;top:513.5px;width:4px;height:4px;background:#2a2a2a;border-radius:50%"></div>
<div class="abs" style="left:1317px;top:518.9px;width:4px;height:4px;background:#2a2a2a;border-radius:50%"></div>
<div class="abs" style="left:1317px;top:524.3px;width:4px;height:4px;background:#2a2a2a;border-radius:50%"></div>
<div class="abs" style="left:305px;top:580px;width:1034px;height:1px;background:#ececec"></div>
<div class="abs" style="left:331px;top:553.5px;width:14px;height:14px;background:#fff;border:1px solid #bdbdbd;border-radius:2px"></div>
<div class="t" style="left:371px;top:555.00px;font-size:13px;color:#555;letter-spacing:-0.106px;">S3</div>
<div class="t" style="left:445.7px;top:555.00px;font-size:13px;color:#555;letter-spacing:0.097px;">config-2307935276...</div>
<div class="t" style="left:594.7px;top:555.00px;font-size:13px;color:#555;letter-spacing:0.035px;">230793...</div>
<div class="t" style="left:669px;top:555.00px;font-size:13px;color:#555;letter-spacing:-0.405px;">Asia Pa...</div>
<svg class="abs" style="left:740px;top:548px" width="26" height="26" viewBox="0 0 26 26"><path d="M21.93 15.23 A9.2 9.2 0 1 0 15.38 21.89" fill="none" stroke="#f26a3c" stroke-width="1.35"/><path d="M10.65 12.2 V9.1 A2.5 2.5 0 0 1 15.65 9.1 V12.2" fill="none" stroke="#f26a3c" stroke-width="1.3"/><path d="M8 12 H17.9 L13.1 16.3 V18.9 H8Z" fill="#f26a3c"/><path d="M16.099999999999998 16.099999999999998 L19.7 19.7 M19.7 16.099999999999998 L16.099999999999998 19.7" stroke="#f26a3c" stroke-width="1.15" stroke-linecap="round"/></svg>
<svg class="abs" style="left:814px;top:548px" width="28" height="24" viewBox="0 0 28 24"><g fill="none" stroke="#f26a3c" stroke-width="1.1"><ellipse cx="9" cy="8.4" rx="4.6" ry="2.3"/><path d="M4.4 8.4 V16.2 A4.6 2.3 0 0 0 13.6 16.2 V8.4"/><path d="M4.4 12.3 A4.6 2.3 0 0 0 13.6 12.3"/><ellipse cx="18.9" cy="8.4" rx="4.6" ry="2.3"/><path d="M13.9 11.2 Q18.9 13.2 23.5 10.8" stroke-opacity="0.55"/><path d="M23.5 8.4 V15.8"/></g><path d="M17.2 16.1 L20.599999999999998 19.5 M20.599999999999998 16.1 L17.2 19.5" stroke="#f26a3c" stroke-width="1.15" stroke-linecap="round"/></svg>
<svg class="abs" style="left:888px;top:548px" width="24" height="26" viewBox="0 0 24 26"><g fill="none" stroke="#f26a3c" stroke-width="1.2"><ellipse cx="12" cy="6.3" rx="7.3" ry="2.7"/><path d="M4.7 6.5 L7 19.5 Q7.6 21.9 11 22 L14 22.1"/><path d="M19.3 6.5 L18.5 12.7"/></g><circle cx="11.8" cy="14" r="1.7" fill="#f26a3c"/><path d="M11.8 14 V19.5" stroke="#f26a3c" stroke-width="1.3"/><path d="M15.2 16.099999999999998 L18.8 19.7 M18.8 16.099999999999998 L15.2 19.7" stroke="#f26a3c" stroke-width="1.15" stroke-linecap="round"/></svg>
<svg class="abs" style="left:964px;top:550px" width="26" height="20" viewBox="0 0 26 20"><g fill="none" stroke="#f26a3c" stroke-width="1.1" stroke-linecap="round"><path d="M6.4 15.6 C4.2 15.2 3.1 13.6 3.2 12 C3.3 10.2 4.8 9 7 9 C7.6 6.2 9.8 4.4 13 4.3 C15.4 4.3 17 5.2 18.6 6.2 C21 6.4 22.6 8.4 22.5 12.3"/><path d="M9.8 9.3 V16.5 M9.8 9.3 H17.5 M9.8 12.2 H13.8 M9.8 14 H12.8 M9.8 16.5 H13.2"/></g><path d="M16.47 13.3 L19.67 16.5 M19.67 13.3 L16.47 16.5" stroke="#f26a3c" stroke-width="1.15" stroke-linecap="round"/></svg>
<svg class="abs" style="left:1038px;top:548px" width="26" height="26" viewBox="0 0 26 26"><g fill="none" stroke="#4cbcf2" stroke-width="1.6"><path d="M21.93 15.23 A9.2 9.2 0 1 0 15.38 21.89"/><path d="M3.6 12.8 H22.4"/><path d="M12.6 3.8 C9.2 7.6 9.2 18.4 14.6 22.2"/><path d="M15.2 7.2 C15.9 8.6 16.3 10.5 16.4 12.8"/></g><path d="M16.3 16.3 L19.7 19.7 M19.7 16.3 L16.3 19.7" stroke="#4cbcf2" stroke-width="1.15" stroke-linecap="round"/></svg>
<div class="t" style="left:1115.6px;top:555.00px;font-size:13px;color:#555;letter-spacing:-0.737px;">19.1 MB</div>
<div class="abs" style="left:1190px;top:548px;width:87px;height:26px;background:#ececec;border:1px solid #dddddd;border-radius:3px"></div>
<div class="t" style="left:1197px;top:554.20px;font-size:13px;color:#444;letter-spacing:0.059px;">View:</div>
<div class="t" style="left:1231.7px;top:554.20px;font-size:13px;color:#333;font-weight:bold;letter-spacing:-0.284px;">3 Tags</div>
<div class="abs" style="left:1317px;top:553.5px;width:4px;height:4px;background:#2a2a2a;border-radius:50%"></div>
<div class="abs" style="left:1317px;top:558.9px;width:4px;height:4px;background:#2a2a2a;border-radius:50%"></div>
<div class="abs" style="left:1317px;top:564.3px;width:4px;height:4px;background:#2a2a2a;border-radius:50%"></div>
<div class="abs" style="left:305px;top:620px;width:1034px;height:1px;background:#ececec"></div>
<div class="abs" style="left:331px;top:593.5px;width:14px;height:14px;background:#fff;border:1px solid #bdbdbd;border-radius:2px"></div>
<div class="t" style="left:371px;top:595.00px;font-size:13px;color:#555;letter-spacing:-0.106px;">S3</div>
<div class="t" style="left:445.7px;top:595.00px;font-size:13px;color:#555;letter-spacing:0.097px;">config-2308881992...</div>
<div class="t" style="left:594.7px;top:595.00px;font-size:13px;color:#555;letter-spacing:0.035px;">230888...</div>
<div class="t" style="left:669px;top:595.00px;font-size:13px;color:#555;letter-spacing:-0.405px;">Asia Pa...</div>
<svg class="abs" style="left:740px;top:588px" width="26" height="26" viewBox="0 0 26 26"><path d="M21.93 15.23 A9.2 9.2 0 1 0 15.38 21.89" fill="none" stroke="#f26a3c" stroke-width="1.35"/><path d="M10.65 12.2 V9.1 A2.5 2.5 0 0 1 15.65 9.1 V12.2" fill="none" stroke="#f26a3c" stroke-width="1.3"/><path d="M8 12 H17.9 L13.1 16.3 V18.9 H8Z" fill="#f26a3c"/><path d="M16.099999999999998 16.099999999999998 L19.7 19.7 M19.7 16.099999999999998 L16.099999999999998 19.7" stroke="#f26a3c" stroke-width="1.15" stroke-linecap="round"/></svg>
<svg class="abs" style="left:814px;top:588px" width="28" height="24" viewBox="0 0 28 24"><g fill="none" stroke="#f26a3c" stroke-width="1.1"><ellipse cx="9" cy="8.4" rx="4.6" ry="2.3"/><path d="M4.4 8.4 V16.2 A4.6 2.3 0 0 0 13.6 16.2 V8.4"/><path d="M4.4 12.3 A4.6 2.3 0 0 0 13.6 12.3"/><ellipse cx="18.9" cy="8.4" rx="4.6" ry="2.3"/><path d="M13.9 11.2 Q18.9 13.2 23.5 10.8" stroke-opacity="0.55"/><path d="M23.5 8.4 V15.8"/></g><path d="M17.2 16.1 L20.599999999999998 19.5 M20.599999999999998 16.1 L17.2 19.5" stroke="#f26a3c" stroke-width="1.15" stroke-linecap="round"/></svg>
<svg class="abs" style="left:888px;top:588px" width="24" height="26" viewBox="0 0 24 26"><g fill="none" stroke="#f26a3c" stroke-width="1.2"><ellipse cx="12" cy="6.3" rx="7.3" ry="2.7"/><path d="M4.7 6.5 L7 19.5 Q7.6 21.9 11 22 L14 22.1"/><path d="M19.3 6.5 L18.5 12.7"/></g><circle cx="11.8" cy="14" r="1.7" fill="#f26a3c"/><path d="M11.8 14 V19.5" stroke="#f26a3c" stroke-width="1.3"/><path d="M15.2 16.099999999999998 L18.8 19.7 M18.8 16.099999999999998 L15.2 19.7" stroke="#f26a3c" stroke-width="1.15" stroke-linecap="round"/></svg>
<svg class="abs" style="left:964px;top:590px" width="26" height="20" viewBox="0 0 26 20"><g fill="none" stroke="#f26a3c" stroke-width="1.1" stroke-linecap="round"><path d="M6.4 15.6 C4.2 15.2 3.1 13.6 3.2 12 C3.3 10.2 4.8 9 7 9 C7.6 6.2 9.8 4.4 13 4.3 C15.4 4.3 17 5.2 18.6 6.2 C21 6.4 22.6 8.4 22.5 12.3"/><path d="M9.8 9.3 V16.5 M9.8 9.3 H17.5 M9.8 12.2 H13.8 M9.8 14 H12.8 M9.8 16.5 H13.2"/></g><path d="M16.47 13.3 L19.67 16.5 M19.67 13.3 L16.47 16.5" stroke="#f26a3c" stroke-width="1.15" stroke-linecap="round"/></svg>
<svg class="abs" style="left:1038px;top:588px" width="26" height="26" viewBox="0 0 26 26"><g fill="none" stroke="#4cbcf2" stroke-width="1.6"><path d="M21.93 15.23 A9.2 9.2 0 1 0 15.38 21.89"/><path d="M3.6 12.8 H22.4"/><path d="M12.6 3.8 C9.2 7.6 9.2 18.4 14.6 22.2"/><path d="M15.2 7.2 C15.9 8.6 16.3 10.5 16.4 12.8"/></g><path d="M16.3 16.3 L19.7 19.7 M19.7 16.3 L16.3 19.7" stroke="#4cbcf2" stroke-width="1.15" stroke-linecap="round"/></svg>
<div class="t" style="left:1115.6px;top:595.00px;font-size:13px;color:#555;letter-spacing:-0.384px;">110.0 MB</div>
<div class="abs" style="left:1190px;top:588px;width:87px;height:26px;background:#ececec;border:1px solid #dddddd;border-radius:3px"></div>
<div class="t" style="left:1197px;top:594.20px;font-size:13px;color:#444;letter-spacing:0.059px;">View:</div>
<div class="t" style="left:1231.7px;top:594.20px;font-size:13px;color:#333;font-weight:bold;letter-spacing:-0.284px;">3 Tags</div>
<div class="abs" style="left:1317px;top:593.5px;width:4px;height:4px;background:#2a2a2a;border-radius:50%"></div>
<div class="abs" style="left:1317px;top:598.9px;width:4px;height:4px;background:#2a2a2a;border-radius:50%"></div>
<div class="abs" style="left:1317px;top:604.3px;width:4px;height:4px;background:#2a2a2a;border-radius:50%"></div>
<div class="abs" style="left:305px;top:381px;width:1034px;height:5px;background:linear-gradient(rgba(0,0,0,0.05),rgba(0,0,0,0))"></div>
<div class="abs" style="left:305px;top:590px;width:1034px;height:16px;background:linear-gradient(rgba(0,0,0,0),rgba(0,0,0,0.06))"></div>
<div class="abs" style="left:305px;top:606px;width:1051px;height:47px;background:#fff"></div>
<div class="abs" style="left:330px;top:623px;width:17px;height:16px;background:#2b2b2b;border-radius:4px"></div>
<div class="t" style="left:334.5px;top:625.00px;font-size:13px;color:#fff;letter-spacing:0px;">3</div>
<div class="t" style="left:355.4px;top:625.00px;font-size:13px;color:#888;letter-spacing:-0.131px;">Items Selected</div>
<div class="t" style="left:456px;top:625.00px;font-size:13px;color:#5fc3f5;letter-spacing:-0.27px;">Clear</div>
<div class="abs" style="left:839px;top:605px;width:152.5px;height:45px;border:3px solid #c9391a"></div>
<div class="abs" style="left:996px;top:605px;width:190px;height:45px;border:3px solid #c9391a"></div>
<div class="abs" style="left:845px;top:616px;width:142px;height:30px;background:#52c5f6;border-radius:4px"></div>
<div class="t" style="left:858.5px;top:624.83px;font-size:12.6px;color:#fff;letter-spacing:-0.14px;-webkit-text-stroke:0.2px #fff;">Save as Fixed Group</div>
<div class="abs" style="left:999.5px;top:616px;width:182.5px;height:30px;background:#fff;border:1px solid #8dd7f7;border-radius:4px"></div>
<div class="t" style="left:1013px;top:624.83px;font-size:12.6px;color:#5fc3f5;letter-spacing:0.054px;">Add to existing Fixed Group</div>
<div class="abs" style="left:1193px;top:616px;width:138px;height:30px;background:#c4c4c4;border-radius:4px"></div>
<div class="t" style="left:1207px;top:624.83px;font-size:12.6px;color:#e6e6e6;letter-spacing:0.046px;">Add to Backup Plan</div>
<div class="abs" style="left:1339px;top:211px;width:17px;height:395px;background:#f1f1f1"></div>
<div class="abs" style="left:1341px;top:228px;width:13px;height:95px;background:#c1c1c1"></div>
<svg class="abs" style="left:1339px;top:211px" width="17" height="395"><path d="M4.5 11 L8.5 7 L12.5 11Z" fill="#a3a3a3"/><path d="M4.5 384 L8.5 388 L12.5 384Z" fill="#505050"/></svg>
</body></html>
